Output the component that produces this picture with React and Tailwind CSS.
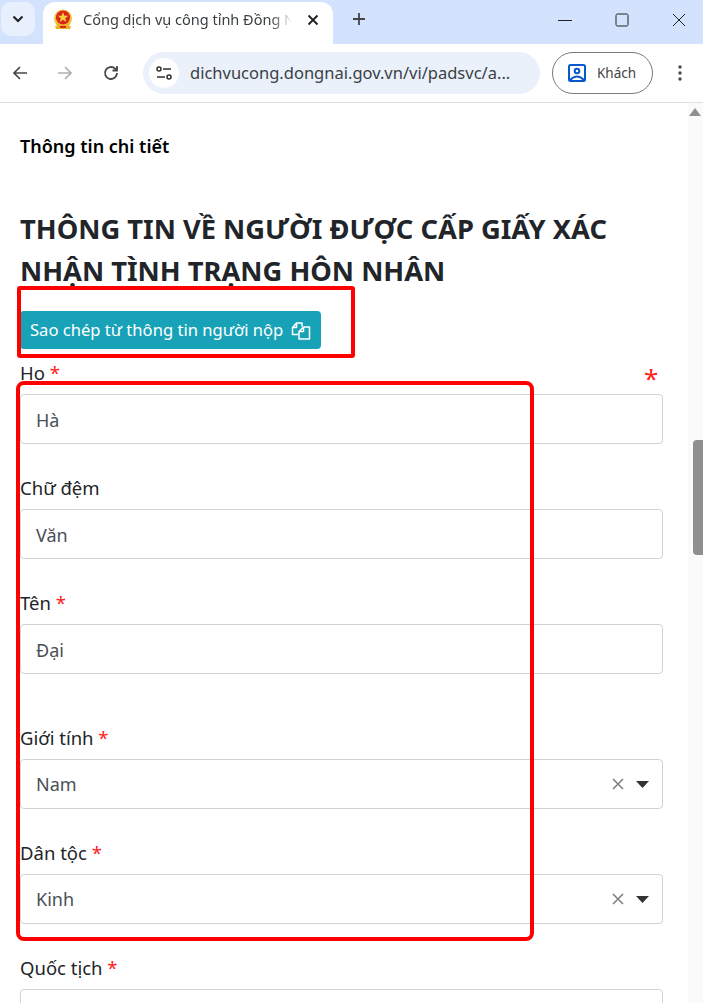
import React from "react";

const font = "font-['Noto_Sans','Open_Sans',sans-serif]";

function Emblem() {
  return (
    <svg width="20" height="22" viewBox="0 0 20 22">
      <circle cx="10" cy="9.500" r="9" fill="#f2c230" />
      <circle cx="10" cy="8.500" r="7" fill="#d8261c" />
      <path d="M10 3l1.400 3.700 3.900.1-3.100 2.400 1.100 3.800-3.300-2.200-3.300 2.200 1.100-3.800-3.100-2.400 3.900-.1z" fill="#f7d13d" />
      <path d="M3 14q7 4 14 0l-1 3h2l-1 3H3l-1-3h2z" fill="#eeb322" />
      <path d="M7 17h6v2H7z" fill="#d8261c" />
    </svg>
  );
}

function Field({ label, required, value, select, className = "" }) {
  return (
    <div className={className}>
      <label className="block h-[36px] text-[18.500px] leading-[30px] text-[#212529]">
        {label}
        {required && <span className="text-[#ff2020]"> *</span>}
      </label>
      <div className={select
        ? "flex h-[50px] items-center justify-between rounded-[4px] border border-[#ced4da] pl-[15px] pr-[13px] text-[18px] text-[#495057]"
        : "flex h-[50px] items-center justify-between rounded-[4px] border border-[#ced4da] pl-[15px] pr-[13px] pt-[3px] text-[18px] text-[#495057]"}>
        <span>{value}</span>
        {select && (
          <span className="flex items-center gap-[12px]">
            <svg width="12" height="12" viewBox="0 0 12 12" stroke="#808080" strokeWidth="1.600" fill="none"><path d="M1 1l10 10M11 1L1 11" /></svg>
            <svg width="13" height="7" viewBox="0 0 13 7" fill="#333"><path d="M0 0h13L6.500 7z" /></svg>
          </span>
        )}
      </div>
    </div>
  );
}

export default function App() {
  return (
    <div className={`relative flex h-[1003px] w-[703px] flex-col overflow-hidden bg-white ${font}`}>
      {/* tab strip */}
      <div className="flex h-[44px] shrink-0 items-end bg-[#d3e3fd]">
        <div className="mb-[8px] ml-[1px] flex h-[34px] w-[34px] items-center justify-center rounded-[10px] bg-[#e8f0fe]">
          <svg width="12" height="8" viewBox="0 0 12 8" fill="none" stroke="#1f1f1f" strokeWidth="2"><path d="M1.500 1.500L6 6l4.500-4.500" /></svg>
        </div>
        <div className="ml-[8px] flex h-[42px] w-[290px] items-center rounded-t-[12px] bg-white pb-[7px] pl-[10px]">
          <Emblem />
          <span className="ml-[10px] w-[209px] whitespace-nowrap text-[14.500px] text-[#3c4043] [mask-image:linear-gradient(to_right,black_90%,transparent)]">Cổng dịch vụ công tỉnh Đồng N</span>
          <svg className="ml-[15px]" width="12" height="12" viewBox="0 0 12 12" stroke="#1f1f1f" strokeWidth="1.800"><path d="M1.500 1.500l9 9M10.500 1.500l-9 9" /></svg>
        </div>
        <svg className="mb-[18px] ml-[19px]" width="14" height="14" viewBox="0 0 14 14" stroke="#444" strokeWidth="1.800"><path d="M7 1v12M1 7h12" /></svg>
        <div className="mb-[17px] ml-auto flex items-center gap-[43px] pr-[17px]">
          <svg width="14" height="14" viewBox="0 0 14 14" stroke="#222" strokeWidth="1"><path d="M0 7.500h14" /></svg>
          <svg width="14" height="14" viewBox="0 0 14 14" stroke="#222" strokeWidth="1" fill="none"><rect x="1" y="1" width="12" height="12" rx="1.500" /></svg>
          <svg width="14" height="14" viewBox="0 0 14 14" stroke="#222" strokeWidth="1"><path d="M1 1l12 12M13 1L1 13" /></svg>
        </div>
      </div>

      {/* toolbar */}
      <div className="flex h-[59px] shrink-0 items-center border-b border-[#e0e0e0] bg-white pl-[12px]">
        <svg width="16" height="16" viewBox="0 0 16 16" fill="none" stroke="#474747" strokeWidth="1.700"><path d="M15 8H2M8 2L2 8l6 6" /></svg>
        <svg className="ml-[29px]" width="16" height="16" viewBox="0 0 16 16" fill="none" stroke="#b0b0b0" strokeWidth="1.700"><path d="M1 8h13M8 2l6 6-6 6" /></svg>
        <svg className="ml-[29px]" width="18" height="18" viewBox="0 0 18 18" fill="none" stroke="#474747" strokeWidth="1.800"><path d="M15 9a6 6 0 1 1-1.800-4.300L15 6.500M15 2v4.500h-4.500" /></svg>
        <div className="ml-[23px] flex h-[42px] w-[397px] items-center rounded-full bg-[#ebf1fa] pl-[6px]">
          <div className="flex h-[30px] w-[30px] items-center justify-center rounded-full bg-white">
            <svg width="18" height="14" viewBox="0 0 18 14" fill="none" stroke="#303030" strokeWidth="1.500"><circle cx="4" cy="3" r="2" /><path d="M8 3h8M2 11h8" /><circle cx="14" cy="11" r="2" /></svg>
          </div>
          <span className="ml-[11px] whitespace-nowrap text-[16.500px] text-[#3a3f45]">dichvucong.dongnai.gov.vn/vi/padsvc/a...</span>
        </div>
        <div className="ml-[12px] flex h-[42px] w-[101px] items-center rounded-full border border-[#7a7a7a] pl-[14px]">
          <svg width="20" height="20" viewBox="0 0 20 20" fill="none" stroke="#0b57d0" strokeWidth="2"><rect x="2" y="2" width="16" height="16" rx="1.500" /><circle cx="10" cy="8" r="2.300" /><path d="M3 17q7-7 14 0" /></svg>
          <span className="ml-[10px] text-[13.500px] text-[#444]">Khách</span>
        </div>
        <svg className="ml-[25px]" width="4" height="16" viewBox="0 0 4 16" fill="#474747"><circle cx="2" cy="2" r="1.700" /><circle cx="2" cy="8" r="1.700" /><circle cx="2" cy="14" r="1.700" /></svg>
      </div>

      {/* page */}
      <div className="flex min-h-0 flex-1">
        <main className="min-w-0 flex-1 pl-[20px] pr-[25px]">
          <h2 className="mt-[28px] text-[18px] font-semibold leading-[30px] text-black">Thông tin chi tiết</h2>
          <h1 className="mt-[47px] text-[27.300px] font-bold leading-[42px] text-[#212529]">THÔNG TIN VỀ NGƯỜI ĐƯỢC CẤP GIẤY XÁC NHẬN TÌNH TRẠNG HÔN NHÂN</h1>
          <button className="mt-[19px] flex h-[38px] w-[301px] items-center rounded-[4px] bg-[#18a2b8] pl-[10px] pt-[1px] text-[16.600px] whitespace-nowrap text-white">
            Sao chép từ thông tin người nộp
            <svg className="ml-[8px]" width="20" height="18" viewBox="0 0 20 18" fill="none" stroke="white" strokeWidth="1.500" strokeLinejoin="round"><path d="M7 12.500H1.500V5.500L5.500 1h5.500v3.500M5.500 1v4.500h-4M12.500 5h6v12h-10.500V9.500zM12.500 5v4.500H8" /></svg>
          </button>
          <Field className="mt-[9px]" label="Họ" required value="Hà" />
          <Field className="mt-[29px]" label="Chữ đệm" value="Văn" />
          <Field className="mt-[29px]" label="Tên" required value="Đại" />
          <Field className="mt-[49px]" label="Giới tính" required value="Nam" select />
          <Field className="mt-[29px]" label="Dân tộc" required value="Kinh" select />
          <Field className="mt-[29px]" label="Quốc tịch" required value="" />
        </main>
        <div className="relative w-[15px] shrink-0 bg-[#fafafa]">
          <div className="absolute left-0 top-[5px] ml-[1px] h-0 w-0 border-x-[6px] border-b-[8px] border-x-transparent border-b-[#909090]" />
          <div className="absolute left-[5px] top-[337px] h-[115px] w-[10px] rounded-l-[4px] bg-[#8f8f8f]" />
        </div>
      </div>

      {/* red annotations */}
      <div className="absolute left-[17px] top-[286px] h-[72px] w-[338px] rounded-[3px] border-4 border-[#ff0000]" />
      <div className="absolute left-[16px] top-[381px] h-[560px] w-[518px] rounded-[8px] border-4 border-[#ff0000]" />
      <span className="absolute left-[644px] top-[362px] text-[26px] leading-[32px] text-[#ff2020]">*</span>
    </div>
  );
}
